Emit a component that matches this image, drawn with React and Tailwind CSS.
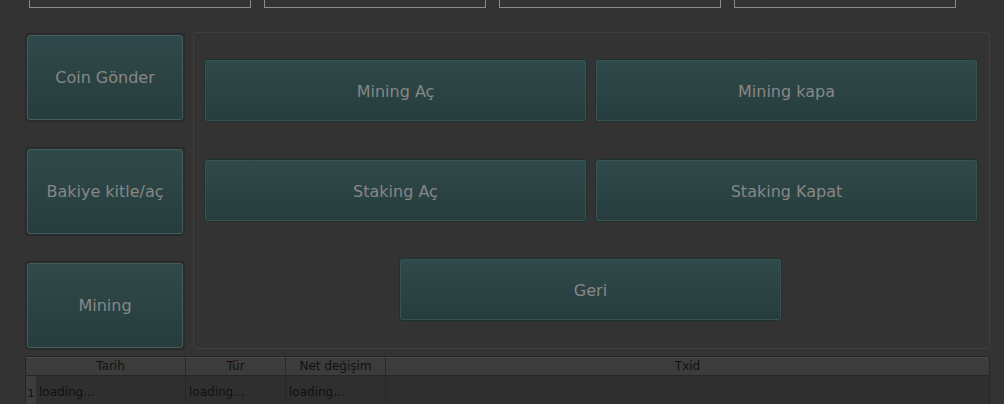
import React from "react"

const font = { fontFamily: '"DejaVu Sans", Verdana, sans-serif' }

function SideButton({ label }) {
  return (
    <div className="h-[89px] w-[160px] rounded-[3px] border border-[#292929] bg-[#2d2d2d] p-px">
      <button className="flex h-full w-full items-center justify-center rounded-[3px] border border-[#3f5f5c] bg-gradient-to-b from-[#30494a] to-[#273d3d] text-[16px] text-[#878787]">
        {label}
      </button>
    </div>
  )
}

function PanelButton({ label }) {
  return (
    <button className="flex h-[63px] w-[383px] shrink-0 items-center justify-center rounded-[3px] border border-[#1f3131] bg-gradient-to-b from-[#30494a] to-[#273d3d] pt-[2px] text-[16px] text-[#878787] shadow-[inset_0_0_0_1px_#375352]">
      {label}
    </button>
  )
}

export default function App() {
  const cols = [
    { name: "Tarih", w: "w-[150px]" },
    { name: "Tür", w: "w-[100px]" },
    { name: "Net değişim", w: "w-[100px]" },
  ]

  return (
    <div className="h-[404px] w-[1004px] overflow-hidden bg-[#333333]" style={font}>
      {/* top inputs, cut off */}
      <div className="flex gap-[13px] pl-[29px]">
        {[0, 1, 2, 3].map((i) => (
          <div key={i} className="h-[8px] w-[222px] border-x border-b border-[#8a8a8a]" />
        ))}
      </div>

      <div className="mt-[24px] flex pl-[25px]">
        {/* left column */}
        <div className="flex flex-col gap-[25px] pt-px">
          <SideButton label="Coin Gönder" />
          <SideButton label="Bakiye kitle/aç" />
          <SideButton label="Mining" />
        </div>

        {/* group box */}
        <div className="ml-[8px] flex h-[317px] w-[797px] flex-col items-start rounded-[3px] border border-[#3e3e3e] pl-[10px] pt-[26px]">
          <div className="flex gap-[8px]">
            <PanelButton label="Mining Aç" />
            <PanelButton label="Mining kapa" />
          </div>
          <div className="mt-[37px] flex gap-[8px]">
            <PanelButton label="Staking Aç" />
            <PanelButton label="Staking Kapat" />
          </div>
          <div className="ml-[195px] mt-[36px]">
            <PanelButton label="Geri" />
          </div>
        </div>
      </div>

      {/* table */}
      <div className="ml-[25px] mt-[6px] w-[965px] border-x border-t border-[#262626] bg-[#2f2f2f] text-[12px]">
        <div className="flex h-[19px] border-b border-[#262626] bg-[#3c3c3c] text-[#111111] shadow-[inset_0_1px_0_#4a4a4a]">
          <div className="w-[10px]" />
          {cols.map((c) => (
            <div key={c.name} className={`${c.w} flex items-center justify-center border-r border-[#2a2a2a]`}>
              {c.name}
            </div>
          ))}
          <div className="flex flex-1 items-center justify-center">Txid</div>
        </div>
        <div className="flex h-[30px] text-[#111111]">
          <div className="flex w-[10px] items-center justify-center bg-[#3c3c3c] pt-[6px] text-[11px]">1</div>
          {cols.map((c) => (
            <div key={c.name} className={`${c.w} flex items-center border-r border-[#282828] pl-[3px] pt-[2px]`}>
              loading...
            </div>
          ))}
          <div className="flex-1" />
        </div>
      </div>
    </div>
  )
}
